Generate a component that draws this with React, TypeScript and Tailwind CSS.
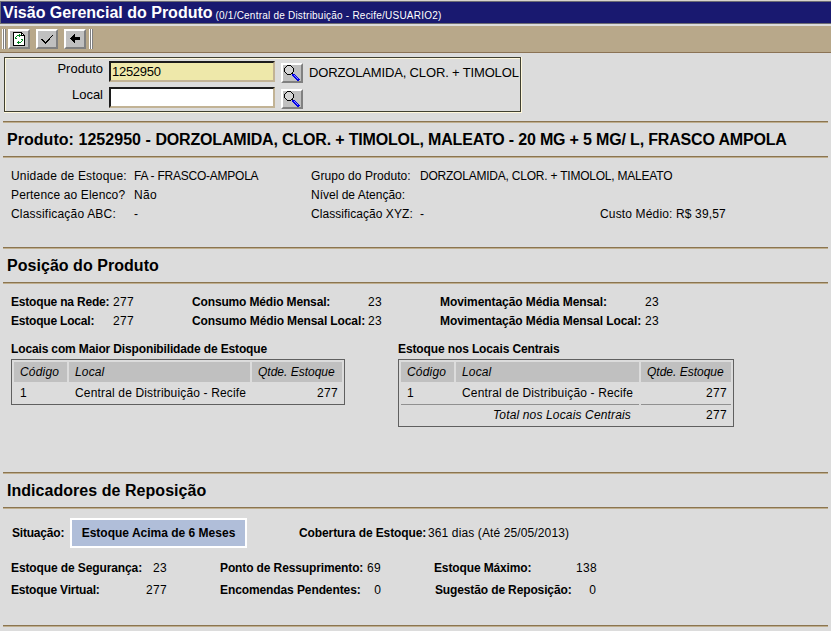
import type { ReactNode } from "react";

function Rule() {
  return <div className="mx-[3px] h-[2px] shrink-0 border-t border-[#8b7550] bg-[#bfae8e]" />;
}

function SectionHeader({ children }: { children: ReactNode }) {
  return (
    <>
      <Rule />
      <h2 className="h-[33px] pl-[7px] text-[16px] leading-[33px] font-bold tracking-[0.04px] whitespace-pre">{children}</h2>
      <Rule />
    </>
  );
}

function T({ className = "", children }: { className?: string; children?: ReactNode }) {
  return <span className={`block shrink-0 whitespace-nowrap ${className}`}>{children}</span>;
}

function ToolButton({ children }: { children: ReactNode }) {
  return (
    <button className="flex h-5 w-[22px] shrink-0 items-center justify-center border-2 border-t-white border-r-[#808080] border-b-[#808080] border-l-white bg-[#c0c0c0]">
      {children}
    </button>
  );
}

function Grip() {
  return (
    <div className="flex h-5 w-[4px]">
      <i className="w-[2px] border-r border-[#808080] bg-white" />
      <i className="w-[2px] border-r border-[#808080] bg-white" />
    </div>
  );
}

function RefreshIcon() {
  return (
    <svg width="12" height="14" viewBox="0 0 12 14" shapeRendering="crispEdges">
      <path d="M.5.5h8l3 3v10H.5z" fill="#fff" stroke="#000" />
      <path d="M8.5.5v3h3" fill="none" stroke="#000" />
      <path d="M4 3h3v1H4zM3 4h1v1H3zM2 5h1v2H2zM6 2h1v1H6zM7 3h1v1H7zM6 4h1v1H6zM5 10h3v1H5zM8 9h1v1H8zM9 7h1v2H9zM5 9h1v1H5zM4 10h1v1H4zM5 11h1v1H5zM3 6h1v1H3zM8 7h1v1H8z" fill="#008a20" />
    </svg>
  );
}

function CheckIcon() {
  return (
    <svg className="mt-[2px]" width="12" height="10" viewBox="0 0 12 10" shapeRendering="crispEdges">
      <path d="M0 4h2v1h1v1h1v1h1V6h1V5h1V4h1V3h1V2h1V1h1V0h1v1h-1v1h-1v1h-1v1H9v1H8v1H7v1H6v1H5v1H4V8H3V7H2V6H1V5H0z" fill="#000" />
    </svg>
  );
}

function BackIcon() {
  return (
    <svg className="-mt-[2px]" width="10" height="9" viewBox="0 0 10 9" shapeRendering="crispEdges">
      <path d="M4 0h1v3h5v3H5v3H4V8H3V7H2V6H1V5H0V4h1V3h1V2h1V1h1z" fill="#000" />
    </svg>
  );
}

function SearchIcon() {
  return (
    <svg width="18" height="16" viewBox="-1 0 18 16" shapeRendering="crispEdges">
      <path d="M3 1h4v1h1v1h1v4H8v1H7v1H3V8H2V7H1V3h1V2h1z" fill="#d4d4d4" />
      <path d="M3 0h4v1H3zM2 1h1v1H2zM7 1h1v1H7zM1 2h1v1H1zM8 2h1v1H8zM0 3h1v4H0zM9 3h1v4H9zM1 7h1v1H1zM2 8h1v1H2zM3 9h4v1H3zM8 7h1v1H8zM7 8h2v1H7z" fill="#000" />
      <path d="M8 9h3v1h1v1h1v1h1v1h1v1h1v1h-1v1h-2v-1h-1v-1h-1v-1h-1v-1h-1v-1H8z" fill="#0000e8" />
      <path d="M10 10h1v1h-1zM11 11h1v1h-1zM12 12h1v1h-1zM13 13h1v1h-1z" fill="#8c8cff" />
    </svg>
  );
}

function Field({ label, value, color, after }: { label: string; value: string; color: string; after?: string }) {
  return (
    <div className="flex h-[26px] items-start text-[13px]">
      <T className="-mt-px w-[97px] text-right leading-[18px]">{label}</T>
      <div className={`ml-[6px] h-[21px] w-[166px] shrink-0 border-2 border-t-[#1c1c1c] border-r-[#c2b395] border-b-[#c2b395] border-l-[#1c1c1c] pl-px leading-[18px] tracking-[-0.28px] ${color}`}>
        {value}
      </div>
      <div className="mt-[2px] ml-[6px] flex shrink-0 items-start">
        <ToolButton>
          <SearchIcon />
        </ToolButton>
        <T className="ml-[6px] leading-[20px] tracking-[-0.15px]">{after}</T>
      </div>
    </div>
  );
}

function HeadCell({ className, children }: { className: string; children: ReactNode }) {
  return <div className={`h-5 bg-[#c0c0c0] leading-5 whitespace-nowrap italic ${className}`}>{children}</div>;
}

function StockTable({ total = false }: { total?: boolean }) {
  const size = total ? "h-[68px] w-[336px]" : "h-[46px] w-[334px]";
  const mid = total ? "w-[183px]" : "w-[181px]";
  return (
    <div className={`border border-[#606060] p-[2px] ${size}`}>
      <div className="flex gap-[2px]">
        <HeadCell className="w-[53px] pl-[6px] tracking-[0.2px]">Código</HeadCell>
        <HeadCell className={`${mid} pl-[6px] tracking-[0.15px]`}>Local</HeadCell>
        <HeadCell className="w-[90px] pl-[6px]">Qtde. Estoque</HeadCell>
      </div>
      <div className="flex gap-[2px] leading-[22px]">
        <T className="w-[53px] pl-[6px]">1</T>
        <T className={`${mid} pl-[6px] tracking-[0.16px]`}>Central de Distribuição - Recife</T>
        <T className="w-[90px] pr-1 text-right tracking-[0.3px]">277</T>
      </div>
      {total && (
        <div className="flex gap-[2px] leading-[20px]">
          <T className="w-[238px] border-t border-[#909090] pr-2 text-right tracking-[0.15px] italic">Total nos Locais Centrais</T>
          <T className="w-[90px] border-t border-[#909090] pr-1 text-right tracking-[0.3px]">277</T>
        </div>
      )}
    </div>
  );
}

export default function App() {
  return (
    <div className="h-[631px] w-[831px] overflow-hidden bg-[#dcdcdc] font-['Liberation_Sans',Arial,sans-serif] text-[12px] text-black">
      <header className="flex h-[25px] border-t border-[#d8d4cc] bg-[#dcdcdc]">
        <div className="flex h-[23px] w-full items-center border border-r-0 border-[#6c6c74] bg-[#191970] pl-[2px] text-white">
          <T className="text-[16px] font-bold">Visão Gerencial do Produto</T>
          <T className="mt-[5px] ml-[3px] text-[10px] tracking-[0.22px]">(0/1/Central de Distribuição - Recife/USUARIO2)</T>
        </div>
      </header>

      <nav className="mt-px flex h-[27px] items-start border-b border-[#8b7355] bg-[#b8a88a] pt-[3px] pl-[2px]">
        <Grip />
        <div className="ml-[2px] flex gap-[6px]">
          <ToolButton><RefreshIcon /></ToolButton>
          <ToolButton><CheckIcon /></ToolButton>
          <ToolButton><BackIcon /></ToolButton>
        </div>
        <div className="ml-[3px]"><Grip /></div>
      </nav>

      <form className="mt-[4px] ml-[4px] h-[56px] w-[518px] border-r border-b border-[#fff8dc]">
        <div className="h-[55px] w-[517px] border border-[#404030]">
          <div className="h-[53px] border-t border-l border-[#fff8dc] pt-[2px]">
            <Field label="Produto" value="1252950" color="bg-[#eee8aa]" after="DORZOLAMIDA, CLOR. + TIMOLOL" />
            <Field label="Local" value="" color="bg-white" />
          </div>
        </div>
      </form>

      <main className="mt-[8px]">
        <SectionHeader>
          Produto: 1252950 - <span className="tracking-[-0.17px]">DORZOLAMIDA, CLOR. + TIMOLOL, MALEATO - 20 MG + 5 MG/ L, FRASCO AMPOLA</span>
        </SectionHeader>
        <section className="h-[89px] pt-[9px] pl-[11px] leading-[19px]">
          <div className="flex">
            <T className="w-[123px] tracking-[0.2px]">Unidade de Estoque:</T>
            <T className="w-[177px] tracking-[-0.24px]">FA - FRASCO-AMPOLA</T>
            <T className="w-[109px] tracking-[0.06px]">Grupo do Produto:</T>
            <T className="tracking-[-0.22px]">DORZOLAMIDA, CLOR. + TIMOLOL, MALEATO</T>
          </div>
          <div className="flex">
            <T className="w-[123px] tracking-[0.15px]">Pertence ao Elenco?</T>
            <T className="w-[177px] tracking-[0.3px]">Não</T>
            <T>Nível de Atenção:</T>
          </div>
          <div className="flex">
            <T className="w-[123px] tracking-[0.2px]">Classificação ABC:</T>
            <T className="w-[177px]">-</T>
            <T className="w-[109px] tracking-[0.06px]">Classificação XYZ:</T>
            <T className="w-[180px]">-</T>
            <T className="tracking-[0.15px]">Custo Médio: R$ 39,57</T>
          </div>
        </section>

        <SectionHeader>Posição do Produto</SectionHeader>
        <section className="h-[188px] pt-[9px] pl-[11px]">
          <div className="flex leading-[19px]">
            <T className="w-[102px] font-bold tracking-[-0.19px]">Estoque na Rede:</T>
            <T className="w-[79px] tracking-[0.3px]">277</T>
            <T className="w-[176px] font-bold tracking-[-0.15px]">Consumo Médio Mensal:</T>
            <T className="w-[72px] tracking-[0.3px]">23</T>
            <T className="w-[205px] font-bold tracking-[-0.07px]">Movimentação Média Mensal:</T>
            <T className="tracking-[0.3px]">23</T>
          </div>
          <div className="flex leading-[19px]">
            <T className="w-[102px] font-bold tracking-[-0.2px]">Estoque Local:</T>
            <T className="w-[79px] tracking-[0.3px]">277</T>
            <T className="w-[176px] font-bold tracking-[-0.11px]">Consumo Médio Mensal Local:</T>
            <T className="w-[72px] tracking-[0.3px]">23</T>
            <T className="w-[205px] font-bold tracking-[-0.07px]">Movimentação Média Mensal Local:</T>
            <T className="tracking-[0.3px]">23</T>
          </div>
          <div className="mt-[8px] flex">
            <div className="w-[387px]">
              <T className="leading-[20px] font-bold tracking-[-0.14px]">Locais com Maior Disponibilidade de Estoque</T>
              <StockTable />
            </div>
            <div>
              <T className="leading-[20px] font-bold tracking-[-0.12px]">Estoque nos Locais Centrais</T>
              <StockTable total />
            </div>
          </div>
        </section>

        <SectionHeader>Indicadores de Reposição</SectionHeader>
        <section className="h-[116px] pt-[9px] pl-[11px]">
          <div className="flex h-[30px] items-center">
            <T className="w-[59px] pl-px font-bold tracking-[-0.2px]">Situação:</T>
            <T className="h-[30px] w-[177px] border-2 border-white bg-[#b0bed9] text-center leading-[26px] font-bold">Estoque Acima de 6 Meses</T>
            <T className="ml-[52px] w-[129px] font-bold tracking-[-0.1px]">Cobertura de Estoque:</T>
            <T className="tracking-[0.12px]">361 dias (Até 25/05/2013)</T>
          </div>
          <div className="mt-[9px] flex leading-[22px]">
            <T className="w-[126px] font-bold tracking-[-0.11px]">Estoque de Segurança:</T>
            <T className="w-[30px] text-right tracking-[0.3px]">23</T>
            <T className="ml-[53px] w-[142px] font-bold tracking-[-0.12px]">Ponto de Ressuprimento:</T>
            <T className="w-[19px] text-right tracking-[0.3px]">69</T>
            <T className="ml-[53px] w-[142px] font-bold tracking-[-0.13px]">Estoque Máximo:</T>
            <T className="w-[20px] text-right tracking-[0.3px]">138</T>
          </div>
          <div className="flex leading-[22px]">
            <T className="w-[126px] font-bold tracking-[-0.2px]">Estoque Virtual:</T>
            <T className="w-[30px] text-right tracking-[0.3px]">277</T>
            <T className="ml-[53px] w-[142px] font-bold tracking-[-0.1px]">Encomendas Pendentes:</T>
            <T className="w-[19px] text-right">0</T>
            <T className="ml-[54px] w-[141px] font-bold tracking-[-0.13px]">Sugestão de Reposição:</T>
            <T className="w-[20px] text-right">0</T>
          </div>
        </section>
        <Rule />
      </main>
    </div>
  );
}
